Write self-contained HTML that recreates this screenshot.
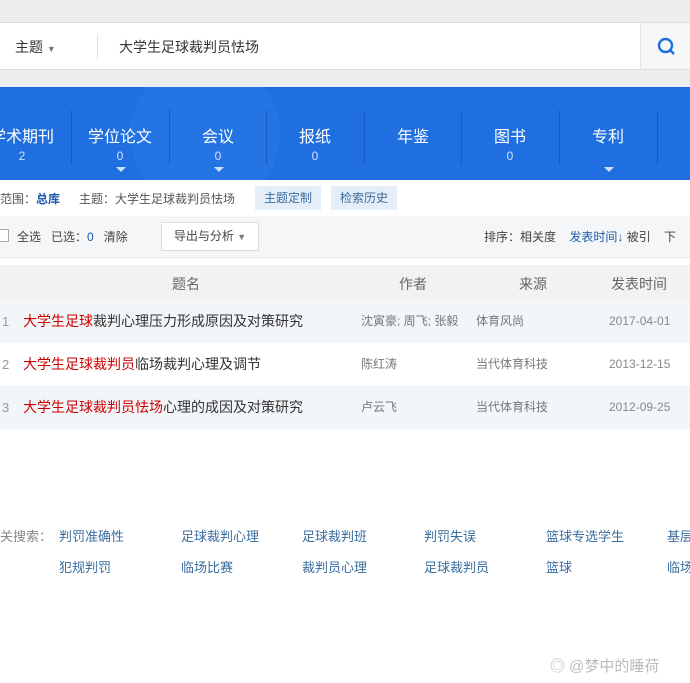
<!DOCTYPE html>
<html><head><meta charset="utf-8"><style>
*{margin:0;padding:0;box-sizing:border-box}
body{width:690px;height:683px;overflow:hidden;background:#fff;font-family:"Liberation Sans","Noto Sans CJK SC",sans-serif;position:relative;color:#333}
.a{position:absolute;white-space:nowrap}
.tab{position:absolute;top:87px;height:93px;width:98px;text-align:center;color:#fff}
.tab .t{position:absolute;top:36px;width:100%;font-size:16px}
.tab .n{position:absolute;top:62px;width:100%;font-size:12px;color:#cfe0ff}
.tab .ar{position:absolute;top:80px;left:45px;width:0;height:0;border:5px solid transparent;border-top:5px solid #cfe0ff}
.sep{position:absolute;top:110px;width:1px;height:55px;background:#165bc4}
.row{position:absolute;left:0;width:690px;height:43px}
.row span{position:absolute;top:0;line-height:43px;font-size:13px;white-space:nowrap}
.red{color:#c00;font-style:normal}
.lk{position:absolute;font-size:13px;color:#3a6d9e;white-space:nowrap}
</style></head><body>
<div class="a" style="left:0;top:0;width:690px;height:87px;background:#eceef0"></div>
<div class="a" style="left:0;top:22px;width:690px;height:48px;background:#fff;border-top:1px solid #ddd;border-bottom:1px solid #ddd"></div>
<div class="a" style="left:640px;top:23px;width:50px;height:46px;background:#f6f7f8;border-left:1px solid #e2e2e2"></div>
<svg class="a" style="left:657px;top:37px" width="20" height="20" viewBox="0 0 20 20"><circle cx="8.5" cy="8.5" r="6.5" fill="none" stroke="#1e6fd9" stroke-width="2.4"/><path d="M13 13l4 4" stroke="#1e6fd9" stroke-width="2.6"/></svg>
<div class="a" style="left:15px;top:37px;font-size:14px;color:#333">主题 <span style="font-size:9px;color:#777">▼</span></div>
<div class="a" style="left:97px;top:35px;width:1px;height:24px;background:#ddd"></div>
<div class="a" style="left:119px;top:37px;font-size:14px;color:#333">大学生足球裁判员怯场</div>
<div class="a" style="left:0;top:87px;width:690px;height:93px;background:#1f6fe0"></div>
<div class="a" style="left:130px;top:60px;width:150px;height:150px;border-radius:50%;background:#2a78e4;opacity:.6;clip-path:inset(27px 0 30px 0)"></div>
<div class="tab" style="left:-27px"><div class="t">学术期刊</div><div class="n">2</div></div>
<div class="tab" style="left:71px"><div class="t">学位论文</div><div class="n">0</div><div class="ar"></div></div>
<div class="tab" style="left:169px"><div class="t">会议</div><div class="n">0</div><div class="ar"></div></div>
<div class="tab" style="left:266px"><div class="t">报纸</div><div class="n">0</div></div>
<div class="tab" style="left:364px"><div class="t">年鉴</div></div>
<div class="tab" style="left:461px"><div class="t">图书</div><div class="n">0</div></div>
<div class="tab" style="left:559px"><div class="t">专利</div><div class="ar"></div></div>
<div class="sep" style="left:71px"></div><div class="sep" style="left:169px"></div><div class="sep" style="left:266px"></div><div class="sep" style="left:364px"></div><div class="sep" style="left:461px"></div><div class="sep" style="left:559px"></div><div class="sep" style="left:657px"></div>
<div class="a" style="left:0;top:190px;font-size:12px;color:#555">范围：<b style="color:#1a5aa8">总库</b></div>
<div class="a" style="left:79px;top:190px;font-size:12px;color:#555">主题：大学生足球裁判员怯场</div>
<div class="a" style="left:255px;top:186px;width:66px;height:24px;background:#e4edf8;color:#3a6d9e;font-size:12px;text-align:center;line-height:24px">主题定制</div>
<div class="a" style="left:331px;top:186px;width:66px;height:24px;background:#e4edf8;color:#3a6d9e;font-size:12px;text-align:center;line-height:24px">检索历史</div>
<div class="a" style="left:0;top:216px;width:690px;height:42px;background:#f4f6f8;border-bottom:1px solid #e6e6e6"></div>
<div class="a" style="left:-4px;top:229px;width:13px;height:13px;border:1px solid #aaa;background:#fff"></div>
<div class="a" style="left:17px;top:228px;font-size:12px;color:#444">全选 &nbsp; 已选：<span style="color:#1a5aa8">0</span> &nbsp; 清除</div>
<div class="a" style="left:161px;top:222px;width:98px;height:29px;background:#fff;border:1px solid #ddd;font-size:12px;color:#444;line-height:27px;text-align:center">导出与分析 <span style="font-size:9px;color:#777">▼</span></div>
<div class="a" style="left:484px;top:228px;font-size:12px;color:#444">排序：相关度 &nbsp; &nbsp;<b style="color:#1a5aa8;font-weight:normal">发表时间↓</b> 被引 &nbsp; &nbsp;下</div>
<div class="a" style="left:0;top:265px;width:690px;height:35px;background:#f2f2f2"></div>
<div class="a" style="left:172px;top:274px;font-size:14px;color:#666">题名</div>
<div class="a" style="left:399px;top:274px;font-size:14px;color:#666">作者</div>
<div class="a" style="left:519px;top:274px;font-size:14px;color:#666">来源</div>
<div class="a" style="left:611px;top:274px;font-size:14px;color:#666">发表时间</div>
<div class="row" style="top:300px;background:#f3f6f9"><span style="left:2px;color:#999">1</span><span style="left:23px;font-size:14px"><i class="red">大学生足球</i>裁判心理压力形成原因及对策研究</span><span style="left:361px;color:#777;font-size:12px">沈寅豪; 周飞; 张毅</span><span style="left:476px;color:#777;font-size:12px">体育风尚</span><span style="left:609px;color:#888;font-size:12px">2017-04-01</span></div>
<div class="row" style="top:343px"><span style="left:2px;color:#999">2</span><span style="left:23px;font-size:14px"><i class="red">大学生足球裁判员</i>临场裁判心理及调节</span><span style="left:361px;color:#777;font-size:12px">陈红涛</span><span style="left:476px;color:#777;font-size:12px">当代体育科技</span><span style="left:609px;color:#888;font-size:12px">2013-12-15</span></div>
<div class="row" style="top:386px;background:#f3f6f9"><span style="left:2px;color:#999">3</span><span style="left:23px;font-size:14px"><i class="red">大学生足球裁判员怯场</i>心理的成因及对策研究</span><span style="left:361px;color:#777;font-size:12px">卢云飞</span><span style="left:476px;color:#777;font-size:12px">当代体育科技</span><span style="left:609px;color:#888;font-size:12px">2012-09-25</span></div>
<div class="a" style="left:0;top:526px;font-size:13px;color:#888">关搜索：</div>
<div class="lk" style="left:59px;top:526px">判罚准确性</div><div class="lk" style="left:181px;top:526px">足球裁判心理</div><div class="lk" style="left:302px;top:526px">足球裁判班</div><div class="lk" style="left:424px;top:526px">判罚失误</div><div class="lk" style="left:546px;top:526px">篮球专选学生</div><div class="lk" style="left:667px;top:526px">基层</div>
<div class="lk" style="left:59px;top:557px">犯规判罚</div><div class="lk" style="left:181px;top:557px">临场比赛</div><div class="lk" style="left:302px;top:557px">裁判员心理</div><div class="lk" style="left:424px;top:557px">足球裁判员</div><div class="lk" style="left:546px;top:557px">篮球</div><div class="lk" style="left:667px;top:557px">临场</div>
<div class="a" style="left:550px;top:655px;font-size:15px;color:#bbb">◎ @梦中的睡荷</div>
</body></html>
